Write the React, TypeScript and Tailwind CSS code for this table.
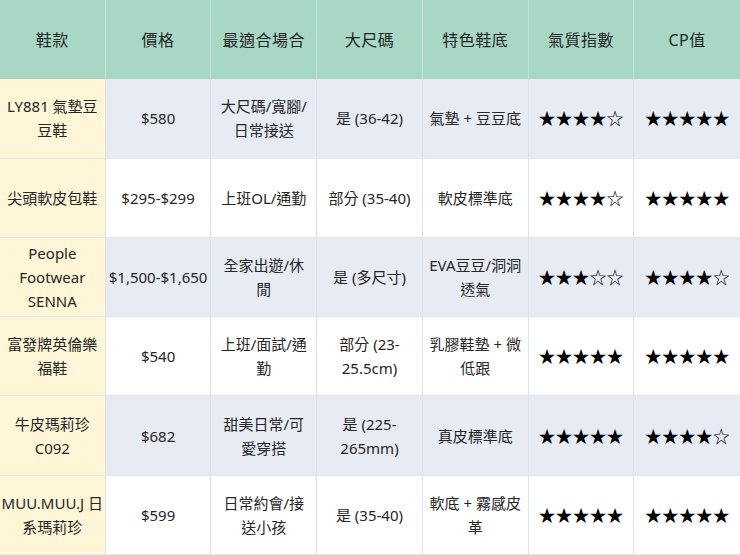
const headers = ["鞋款", "價格", "最適合場合", "大尺碼", "特色鞋底", "氣質指數", "CP值"];

type Row = string[][];

const rows: Row[] = [
  [["LY881 氣墊豆", "豆鞋"], ["$580"], ["大尺碼/寬腳/", "日常接送"], ["是 (36-42)"], ["氣墊 + 豆豆底"], ["★★★★☆"], ["★★★★★"]],
  [["尖頭軟皮包鞋"], ["$295-$299"], ["上班OL/通勤"], ["部分 (35-40)"], ["軟皮標準底"], ["★★★★☆"], ["★★★★★"]],
  [["People", "Footwear", "SENNA"], ["$1,500-$1,650"], ["全家出遊/休", "閒"], ["是 (多尺寸)"], ["EVA豆豆/洞洞", "透氣"], ["★★★☆☆"], ["★★★★☆"]],
  [["富發牌英倫樂", "福鞋"], ["$540"], ["上班/面試/通", "勤"], ["部分 (23-", "25.5cm)"], ["乳膠鞋墊 + 微", "低跟"], ["★★★★★"], ["★★★★★"]],
  [["牛皮瑪莉珍", "C092"], ["$682"], ["甜美日常/可", "愛穿搭"], ["是 (225-", "265mm)"], ["真皮標準底"], ["★★★★★"], ["★★★★☆"]],
  [["MUU.MUU.J 日", "系瑪莉珍"], ["$599"], ["日常約會/接", "送小孩"], ["是 (35-40)"], ["軟底 + 霧感皮", "革"], ["★★★★★"], ["★★★★★"]],
];

export default function App() {
  return (
    <div
      className="w-[740px] h-[555px] overflow-hidden bg-white text-[#262626]"
      style={{ fontFamily: '"Noto Sans", "Noto Sans CJK TC", sans-serif' }}
    >
      <div className="grid grid-cols-7 grid-rows-7 w-full h-full">
        {headers.map((h, i) => (
          <div
            key={h}
            className={`flex items-center justify-center bg-[#a8d7c5] text-[16px] tracking-[0.5px] ${i < 6 ? "border-r border-[#bfe2d4]" : ""}`}
          >
            {h}
          </div>
        ))}
        {rows.map((row, r) =>
          row.map((cell, c) => {
            const bg = c === 0 ? "bg-[#fff5d7]" : r % 2 === 0 ? "bg-[#e7ebf3]" : "bg-white";
            const stars = c >= 5;
            return (
              <div
                key={`${r}-${c}`}
                className={`flex flex-col items-center justify-center text-center whitespace-nowrap border-b border-[#e3e6ec] ${bg} ${c < 6 ? "border-r border-r-[#dde1e8]" : ""} ${stars ? "text-[17px] leading-6 text-black" : "text-[15px] leading-6"}`}
                style={stars ? { fontFamily: '"Noto Sans CJK TC", sans-serif' } : undefined}
              >
                {cell.map((line) => (
                  <span key={line}>{line}</span>
                ))}
              </div>
            );
          })
        )}
      </div>
    </div>
  );
}
